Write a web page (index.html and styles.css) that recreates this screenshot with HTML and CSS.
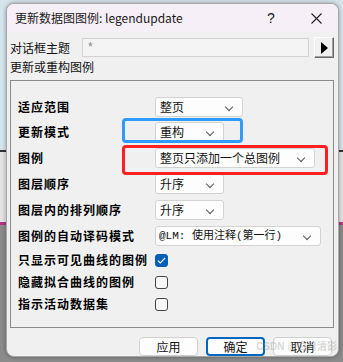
FILE: index.html
```html
<!DOCTYPE html>
<html lang="zh-CN">
<head>
    <meta charset="UTF-8">
    <title>更新数据图图例</title>
    <link rel="stylesheet" href="styles.css">
</head>
<body>
    <!-- Dialog window -->
    <div class="dialog">
        <div class="titlebar">
            <span class="title">更新数据图图例: legendupdate</span>
            <span class="help">?</span>
            <span class="close">
                <svg width="11" height="11" viewBox="0 0 11 11"><path d="M0.5 0.5 L10.5 10.5 M10.5 0.5 L0.5 10.5" stroke="#222" stroke-width="1.1" fill="none"/></svg>
            </span>
        </div>

        <div class="body">
            <div class="theme-row">
                <span class="theme-label">对话框主题</span>
                <div class="theme-input">*</div>
                <button class="arrow-btn">
                    <svg width="8" height="12" viewBox="0 0 8 12"><path d="M1 0 L8 6 L1 12 Z" fill="#000"/></svg>
                </button>
            </div>
            <div class="section-title">更新或重构图例</div>

            <!-- Options group -->
            <div class="group">
                <div class="row first">
                    <span class="label">适应范围</span>
                    <div class="combo w-page">整页<span class="chev"></span></div>
                </div>
                <div class="row">
                    <span class="label">更新模式</span>
                    <div class="combo w-short">重构<span class="chev"></span></div>
                </div>
                <div class="row">
                    <span class="label">图例</span>
                    <div class="combo w-legend">整页只添加一个总图例<span class="chev"></span></div>
                </div>
                <div class="row">
                    <span class="label">图层顺序</span>
                    <div class="combo w-short">升序<span class="chev"></span></div>
                </div>
                <div class="row">
                    <span class="label">图层内的排列顺序</span>
                    <div class="combo w-short">升序<span class="chev"></span></div>
                </div>
                <div class="row">
                    <span class="label">图例的自动译码模式</span>
                    <div class="combo w-auto mono">@LM: 使用注释(第一行)<span class="chev"></span></div>
                </div>
                <div class="row check-row">
                    <span class="label">只显示可见曲线的图例</span>
                    <span class="checkbox checked">
                        <svg width="9" height="7" viewBox="0 0 9 7"><path d="M0.8 3.6 L3.3 6 L8.2 0.8" stroke="#fff" stroke-width="1.2" fill="none"/></svg>
                    </span>
                </div>
                <div class="row check-row">
                    <span class="label">隐藏拟合曲线的图例</span>
                    <span class="checkbox"></span>
                </div>
                <div class="row check-row">
                    <span class="label">指示活动数据集</span>
                    <span class="checkbox"></span>
                </div>

                <!-- annotation boxes -->
                <div class="mark mark-blue"></div>
                <div class="mark mark-red"></div>
            </div>

            <div class="buttons">
                <button class="btn">应用</button>
                <button class="btn default">确定</button>
                <button class="btn">取消</button>
            </div>
        </div>
        <span class="watermark">CSDN @白月清影</span>
    </div>
</body>
</html>
```

FILE: styles.css
```css
/* Page behind the dialog */
body {
    margin: 0;
    width: 343px;
    height: 362px;
    overflow: hidden;
    font-family: "Noto Sans CJK SC", "Noto Sans", sans-serif;
    background: linear-gradient(to bottom, #d6e4ec 0 150px, #333 150px 152px, #e3e3e3 152px 222px, #b23480 222px 225px, #8b8b8b 225px);
}

/* Dialog frame */
.dialog {
    position: relative;
    margin: 3px 0 0 6px;
    width: 333px;
    height: 354px;
    box-sizing: border-box;
    background-color: #f0f0f0;
    border: 1px solid #a8a8a8;
    border-radius: 8px;
    overflow: hidden;
    box-shadow: 0 0 4px rgba(0, 0, 0, 0.35);
}

.titlebar {
    display: flex;
    align-items: center;
    height: 28px;
    padding-left: 8px;
    background-color: #f7eff7;
    font-size: 12px;
    color: #1a1a1a;
}

.title {
    flex: 1;
    line-height: 14px;
}

.help {
    width: 12px;
    margin-right: 32px;
    font-family: "Liberation Sans", sans-serif;
    font-size: 14px;
    line-height: 14px;
}

.close {
    display: flex;
    margin-right: 16px;
}

/* Dialog body */
.body {
    padding: 5px 4px 0 3px;
}

.theme-row {
    display: flex;
    align-items: center;
    height: 21px;
}

.theme-label {
    width: 72px;
    font-size: 12px;
    line-height: 14px;
    color: #111;
}

.theme-input {
    width: 220px;
    height: 17px;
    padding-left: 5px;
    border: 1px solid #d2d2d2;
    background-color: #f4f4f4;
    font-family: "Liberation Sans", sans-serif;
    font-size: 12px;
    line-height: 17px;
    color: #888;
}

.arrow-btn {
    display: flex;
    align-items: center;
    justify-content: center;
    width: 20px;
    height: 21px;
    margin-left: 5px;
    padding: 0;
    background-color: #f0f0f0;
    border: 1px solid;
    border-color: #fff #696969 #696969 #fff;
    box-shadow: inset -1px -1px 0 #a0a0a0;
}

.section-title {
    margin-top: 2px;
    font-size: 12px;
    line-height: 14px;
    color: #111;
}

/* Group box with the options */
.group {
    position: relative;
    margin-top: 6px;
    width: 324px;
    height: 248px;
    box-sizing: border-box;
    border: 1px solid #8a8a8a;
    padding: 13px 0 0 7px;
}

.row {
    display: flex;
    align-items: center;
    height: 26px;
}

.row.first {
    height: 25px;
}

.check-row {
    height: 22px;
}

.label {
    width: 137px;
    flex-shrink: 0;
    font-size: 12px;
    font-weight: bold;
    letter-spacing: 1px;
    line-height: 14px;
    color: #000;
}

.combo {
    position: relative;
    height: 20px;
    box-sizing: border-box;
    padding-left: 4px;
    border: 1px solid #d3d3d3;
    border-radius: 3px;
    background-color: #fdfdfd;
    font-size: 12px;
    line-height: 18px;
    color: #111;
}

.combo.mono {
    font-family: "Liberation Mono", "Noto Sans CJK SC", monospace;
    font-size: 11px;
    padding-left: 3px;
}

.chev {
    position: absolute;
    right: 10px;
    top: 6px;
    width: 5px;
    height: 5px;
    border-right: 1px solid #555;
    border-bottom: 1px solid #555;
    transform: rotate(45deg);
}

.w-page { width: 88px; }
.w-short { width: 69px; }
.w-legend { width: 160px; }
.w-auto { width: 166px; }

.checkbox {
    display: flex;
    align-items: center;
    justify-content: center;
    width: 13px;
    height: 13px;
    box-sizing: border-box;
    border: 1px solid #444;
    border-radius: 3px;
    background-color: #f7f7f7;
}

.checkbox.checked {
    background-color: #005fb8;
    border-color: #005fb8;
}

/* Highlight annotations drawn over the dialog */
.mark {
    position: absolute;
    border-radius: 4px;
    box-sizing: border-box;
}

.mark-blue {
    left: 111px;
    top: 37px;
    width: 121px;
    height: 25px;
    border: 3px solid #2f9bff;
}

.mark-red {
    left: 111px;
    top: 64px;
    width: 206px;
    height: 30px;
    border: 3px solid #ff2020;
}

/* Buttons along the bottom */
.buttons {
    display: flex;
    justify-content: flex-end;
    gap: 8px;
    margin-top: 9px;
    padding-right: 2px;
}

.btn {
    width: 59px;
    height: 19px;
    padding: 0;
    border: 1px solid #d0d0d0;
    border-radius: 4px;
    background-color: #fdfdfd;
    font-family: "Noto Sans CJK SC", sans-serif;
    font-size: 12px;
    line-height: 16px;
    color: #111;
}

.btn.default {
    border: 2px solid #0067c0;
}

.watermark {
    position: absolute;
    right: 1px;
    bottom: 3px;
    font-family: "Liberation Sans", "Noto Sans CJK SC", sans-serif;
    font-size: 10px;
    font-weight: bold;
    line-height: 12px;
    color: rgba(160, 160, 160, 0.4);
}
```
